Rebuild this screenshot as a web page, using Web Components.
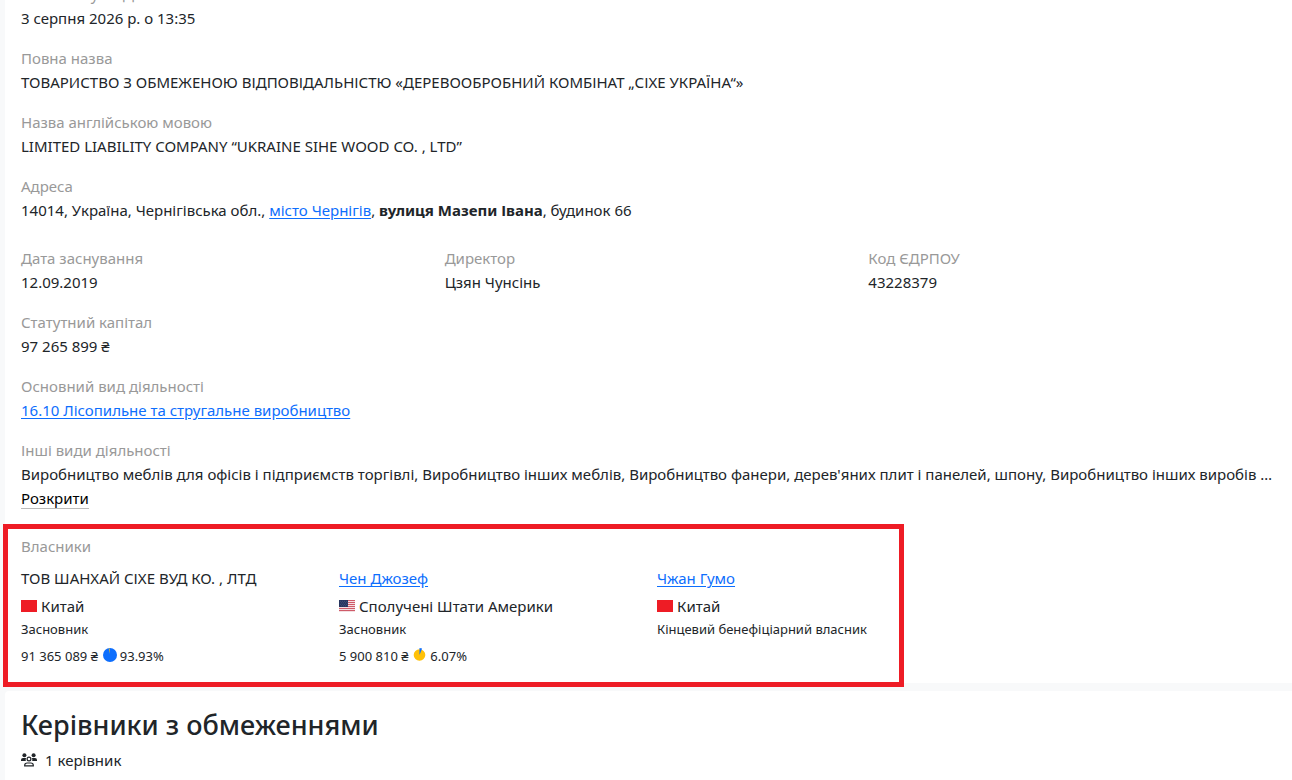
<!DOCTYPE html>
<html lang="uk">
<head>
<meta charset="utf-8">
<meta name="viewport" content="width=device-width, initial-scale=1">
<title>Картка компанії</title>
<style>
  body { margin: 0; background: #f8f9fa; color: #212529; font: 15px/24px "Noto Sans", "Open Sans", sans-serif; overflow: hidden; }
</style>
</head>
<body>
<company-page></company-page>
<script>
const base = `
  * { box-sizing: border-box; }
  a, ::slotted(a) { color: #0d6efd; text-decoration: underline; text-underline-offset: 2px; }
`;
function define(name, html) {
  const template = document.createElement('template');
  template.innerHTML = html;
  customElements.define(name, class extends HTMLElement {
    constructor() {
      super();
      this.attachShadow({ mode: 'open' }).append(template.content.cloneNode(true));
    }
  });
}

define('info-field', `<style>${base}
  :host { display: block; min-width: 0; }
  .label { color: #999; }
</style><div class="label"><slot name="label"></slot></div><div><slot></slot></div>`);

define('page-card', `<style>${base}
  :host { display: block; background: #fff; border-radius: 4px 0 0 4px; padding: var(--card-padding, 16px); }
</style><slot></slot>`);

define('flag-cn', `<style>:host { display: inline-block; width: 16px; height: 12px; margin-right: 4px; background: #ee1c25; }</style>`);

define('flag-us', `<style>:host { display: inline-block; width: 16px; height: 12px; margin-right: 4px; } svg { display: block; }</style>
<svg width="16" height="12" viewBox="0 0 16 12" aria-hidden="true">
  <path fill="#f3dfe2" d="M0 0h16v12H0z"/>
  <path stroke="#cf5b69" stroke-width="1" d="M0 .5h16M0 2.5h16M0 4.5h16M0 6.500h16M0 8.500h16M0 10.500h16"/>
  <path fill="#27355f" d="M0 0h9v7H0z"/>
  <path stroke="#7582a3" stroke-width=".6" stroke-dasharray=".6 1.4" d="M1 1.3h8M2 2.8h7M1 4.3h8M2 5.8h7"/>
</svg>`);

define('share-pie', `<style>:host { display: inline-block; width: 14px; height: 14px; margin: 0 3px 2px 5px; } svg { display: block; }</style>
<svg width="14" height="14" viewBox="0 0 14 14" aria-hidden="true"><circle cx="7" cy="7" r="7" fill="#0d6efd"/><path fill="#ffc107" fill-opacity=".7" d="M7 6L5.600 .6A6.500 6.500 0 0 1 7 .4z"/></svg>`);

define('share-pie-small', `<style>:host { display: inline-block; width: 14px; height: 14px; margin: 0 3px 2px 5px; } svg { display: block; }</style>
<svg width="14" height="14" viewBox="0 0 14 14" aria-hidden="true"><circle cx="6.500" cy="7" r="5.800" fill="#ffc107"/><path fill="#0d6efd" d="M6.500 7V0a7 7 0 0 1 2.600 .5z"/></svg>`);

define('owner-card', `<style>${base}
  :host { display: block; min-width: 0; }
  .name { margin-bottom: 4px; }
  .role { font-size: 13px; line-height: 22px; }
  .share { display: flex; align-items: center; font-size: 13px; line-height: 20px; margin-top: 6px; }
</style>
<div class="name"><slot name="name"></slot></div>
<div><slot name="country"></slot></div>
<div class="role"><slot name="role"></slot></div>
<div class="share"><slot name="share"></slot></div>`);

define('owners-panel', `<style>${base}
  :host { display: block; width: 901px; max-width: 100%; border: 5px solid #ee1c25; padding: 5px 12px 16px 13px; box-sizing: border-box; }
  .label { color: #999; margin-bottom: 8px; }
  .grid { display: grid; grid-template-columns: repeat(3, 302px); column-gap: 16px; }
</style><div class="label"><slot name="label"></slot></div><div class="grid"><slot></slot></div>`);

define('text-clamp', `<style>${base}
  :host { display: block; }
  .text { white-space: nowrap; overflow: hidden; text-overflow: ellipsis; }
  button { display: block; font: inherit; line-height: 20px; color: #000; background: none; border: 0; border-bottom: 1px solid #bbb; padding: 0; margin-top: 2px; }
</style><div class="text"><slot></slot></div><button type="button">Розкрити</button>`);

define('people-count', `<style>${base}
  :host { display: flex; align-items: center; gap: 8px; }
  svg { flex: none; }
</style>
<svg width="16" height="16" viewBox="0 0 16 16" fill="#212529" aria-hidden="true">
  <circle cx="3.4" cy="3.2" r="2"/><circle cx="12.6" cy="3.2" r="2"/>
  <path d="M0 9V8q0-2 2-2h2.300q.5 0 .9.300Q4.300 7.500 4.800 9zM16 9V8q0-2-2-2h-2.300q-.5 0-.9.300.9 1.200.4 2.700z"/>
  <circle cx="8" cy="7" r="1.900" fill="none" stroke="#212529" stroke-width="1.200"/>
  <path d="M3.700 13.800v-.5q0-2.300 2.300-2.300h4q2.300 0 2.300 2.300v.5z" fill="none" stroke="#212529" stroke-width="1.200"/>
</svg><slot></slot>`);

define('company-page', `<style>${base}
  :host { display: flex; flex-direction: column; gap: 8px; padding-left: 5px; margin-top: -18px; }
  .first { --card-padding: 0; }
  .details { display: flex; flex-direction: column; gap: 16px; padding: 0 12px 0 16px; }
  .row { display: grid; grid-template-columns: repeat(3, 1fr); column-gap: 12px; margin-top: 8px; }
  owners-panel { margin: 15px 0 -4px -2px; }
  h2 { font-size: 27px; line-height: 36px; font-weight: 500; margin: 0 0 5px; }
</style>
<page-card class="first">
  <div class="details">
    <info-field><span slot="label">Час витягу з ЄДР</span>3 серпня 2026 р. о 13:35</info-field>
    <info-field><span slot="label">Повна назва</span>ТОВАРИСТВО З ОБМЕЖЕНОЮ ВІДПОВІДАЛЬНІСТЮ «ДЕРЕВООБРОБНИЙ КОМБІНАТ „СІХЕ УКРАЇНА“»</info-field>
    <info-field><span slot="label">Назва англійською мовою</span>LIMITED LIABILITY COMPANY “UKRAINE SIHE WOOD CO. , LTD”</info-field>
    <info-field><span slot="label">Адреса</span>14014, Україна, Чернігівська обл., <a href="#city">місто Чернігів</a>, <b>вулиця Мазепи Івана</b>, будинок 66</info-field>
    <div class="row">
      <info-field><span slot="label">Дата заснування</span>12.09.2019</info-field>
      <info-field><span slot="label">Директор</span>Цзян Чунсінь</info-field>
      <info-field><span slot="label">Код ЄДРПОУ</span>43228379</info-field>
    </div>
    <info-field><span slot="label">Статутний капітал</span>97 265 899 ₴</info-field>
    <info-field><span slot="label">Основний вид діяльності</span><a href="#activity">16.10 Лісопильне та стругальне виробництво</a></info-field>
    <info-field><span slot="label">Інші види діяльності</span><text-clamp>Виробництво меблів для офісів і підприємств торгівлі, Виробництво інших меблів, Виробництво фанери, дерев'яних плит і панелей, шпону, Виробництво інших виробів …</text-clamp></info-field>
  </div>
  <owners-panel>
    <span slot="label">Власники</span>
    <owner-card>
      <span slot="name">ТОВ ШАНХАЙ СІХЕ ВУД КО. , ЛТД</span>
      <span slot="country"><flag-cn></flag-cn>Китай</span>
      <span slot="role">Засновник</span>
      <span slot="share">91 365 089 ₴</span><share-pie slot="share"></share-pie><span slot="share">93.93%</span>
    </owner-card>
    <owner-card>
      <a slot="name" href="#joseph">Чен Джозеф</a>
      <span slot="country"><flag-us></flag-us>Сполучені Штати Америки</span>
      <span slot="role">Засновник</span>
      <span slot="share">5 900 810 ₴</span><share-pie-small slot="share"></share-pie-small><span slot="share">6.07%</span>
    </owner-card>
    <owner-card>
      <a slot="name" href="#gumo">Чжан Гумо</a>
      <span slot="country"><flag-cn></flag-cn>Китай</span>
      <span slot="role">Кінцевий бенефіціарний власник</span>
    </owner-card>
  </owners-panel>
</page-card>
<page-card>
  <h2>Керівники з обмеженнями</h2>
  <people-count>1 керівник</people-count>
</page-card>`);
</script>
</body>
</html>
